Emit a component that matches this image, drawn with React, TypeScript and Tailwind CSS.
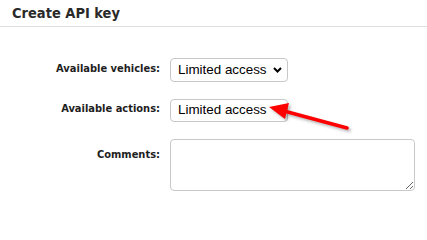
import { useState } from "react"

function Chevron() {
    return (
        <svg width="9" height="6" viewBox="0 0 9 6" className="pointer-events-none absolute right-[6px] top-1/2 -translate-y-1/2">
            <path d="M1 1l3.5 3.5L8 1" fill="none" stroke="#000" strokeWidth="2" />
        </svg>
    )
}

function AccessSelect({ value, onChange, className }: { value: string; onChange: (v: string) => void; className: string }) {
    return (
        <div className={`relative w-[118px] ${className}`}>
            <select
                value={value}
                onChange={(e) => onChange(e.target.value)}
                className="w-full appearance-none rounded-[4px] border border-[#c8c8c8] bg-white pl-[7px] pr-[18px] text-[13.4px] text-black focus:outline-none"
                style={{ fontFamily: "'Liberation Sans', Arial, sans-serif" }}
            >
                <option value="limited">Limited access</option>
                <option value="full">Full access</option>
                <option value="none">No access</option>
            </select>
            <Chevron />
        </div>
    )
}

export default function App() {
    const [vehicles, setVehicles] = useState("limited")
    const [actions, setActions] = useState("limited")

    return (
        <div className="relative h-[212px] w-[427px] overflow-hidden bg-white text-[#1e1e1e]" style={{ fontFamily: "'DejaVu Sans Condensed', 'DejaVu Sans', Tahoma, sans-serif" }}>
            {/* Header */}
            <div className="flex h-[27px] items-center border-b border-[#dedede] pl-[12px]">
                <h1 className="text-[14.5px] font-bold leading-none text-[#2a2a2a]">Create API key</h1>
            </div>

            {/* Form */}
            <div className="flex flex-col pt-[30px]">
                <div className="flex items-center">
                    <label className="w-[161px] pr-[1px] text-right text-[11px] font-bold">Available vehicles:</label>
                    <AccessSelect value={vehicles} onChange={setVehicles} className="ml-[9px] [&_select]:h-[24px]" />
                </div>

                <div className="mt-[15px] flex items-center">
                    <label className="w-[161px] pr-[1px] text-right text-[11px] font-bold">Available actions:</label>
                    <AccessSelect value={actions} onChange={setActions} className="ml-[9px] [&_select]:h-[23px]" />
                </div>

                <div className="mt-[17px] flex items-start">
                    <label className="w-[161px] pr-[1px] pt-[8px] text-right text-[11px] font-bold">Comments:</label>
                    <textarea className="ml-[9px] h-[52px] w-[245px] rounded-[4px] border border-[#c8c8c8] bg-white focus:outline-none" />
                </div>
            </div>

            {/* Annotation arrow */}
            <svg width="427" height="212" className="pointer-events-none absolute left-0 top-0" style={{ filter: "drop-shadow(2px 2px 1.5px rgba(0,0,0,0.3))" }}>
                <line x1="347" y1="128" x2="284" y2="111" stroke="#ff0000" strokeWidth="3.5" strokeLinecap="round" />
                <polygon points="269,107 289,103 285,119" fill="#ff0000" />
            </svg>
        </div>
    )
}
